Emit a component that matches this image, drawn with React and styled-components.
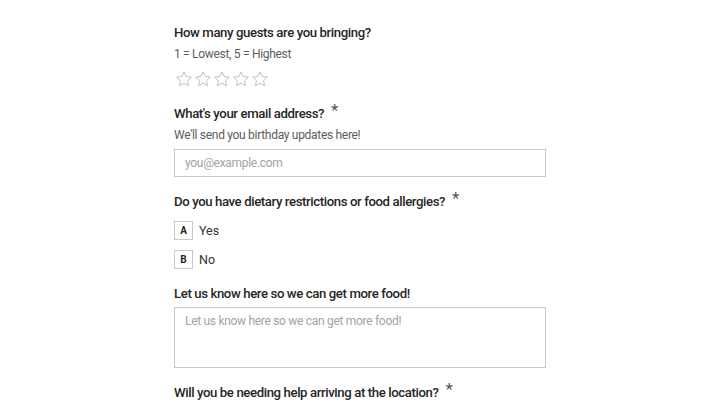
import React from "react";
import styled, { createGlobalStyle } from "styled-components";

const GlobalStyle = createGlobalStyle`
  html, body {
    margin: 0;
    padding: 0;
    background: #fff;
  }
  body {
    font-family: Roboto, "Noto Sans", sans-serif;
    color: #262626;
  }
`;

const Page = styled.div`
  width: 720px;
  height: 405px;
  overflow: hidden;
  display: flex;
  padding-left: 174px;
  box-sizing: border-box;
`;

const Form = styled.div`
  width: 372px;
  display: flex;
  flex-direction: column;
  padding-top: 23px;
`;

const Question = styled.div`
  display: flex;
  flex-direction: column;
  margin-bottom: ${(p) => p.gap || 15}px;
`;

const Title = styled.div`
  font-size: 13.2px;
  font-weight: 500;
  line-height: 20px;
  color: #262626;
  letter-spacing: -0.4px;
  white-space: nowrap;
`;

const Required = styled.span`
  display: inline-block;
  margin-left: 7px;
  font-size: 17px;
  font-weight: 400;
  color: #555;
  vertical-align: top;
  line-height: 14px;
  position: relative;
  top: -1px;
`;

const Hint = styled.div`
  font-size: 12px;
  line-height: 18px;
  color: #5c5c5c;
  margin-top: 2px;
  letter-spacing: -0.3px;
`;

const Stars = styled.div`
  display: flex;
  gap: 1px;
  height: 18px;
  margin-top: 7px;
  margin-left: 1px;
`;

const TextInput = styled.div`
  margin-top: 5px;
  height: 28px;
  border: 1px solid #cacaca;
  box-sizing: border-box;
  display: flex;
  align-items: center;
  padding-left: 10px;
  font-size: 12px;
  letter-spacing: -0.3px;
  color: #a3a3a3;
`;

const TextArea = styled(TextInput)`
  margin-top: 3px;
  height: 61px;
  align-items: flex-start;
  padding-top: 4px;
  line-height: 18px;
`;

const Options = styled.div`
  display: flex;
  flex-direction: column;
  gap: 10px;
  margin-top: 9px;
`;

const Option = styled.div`
  display: flex;
  align-items: center;
  gap: 6px;
  font-size: 12.5px;
  color: #333;
`;

const Key = styled.div`
  width: 19px;
  height: 19px;
  box-sizing: border-box;
  border: 1px solid #cacaca;
  display: flex;
  align-items: center;
  justify-content: center;
  font-size: 10px;
  font-weight: 700;
  color: #262626;
`;

const Star = () => (
  <svg width="18" height="18" viewBox="0 0 24 24" fill="none" stroke="#b8b8b8" strokeWidth="1.2" strokeLinejoin="round">
    <path d="M12 2.5l2.9 6.2 6.8.8-5 4.7 1.3 6.7L12 17.6l-6 3.3 1.3-6.7-5-4.7 6.8-.8z" />
  </svg>
);

export default function App() {
  return (
    <>
      <GlobalStyle />
      <Page>
        <Form>
          <Question gap={16}>
            <Title>How many guests are you bringing?</Title>
            <Hint>1 = Lowest, 5 = Highest</Hint>
            <Stars>
              {[0, 1, 2, 3, 4].map((i) => (
                <Star key={i} />
              ))}
            </Stars>
          </Question>
          <Question>
            <Title>
              What's your email address?<Required>*</Required>
            </Title>
            <Hint>We'll send you birthday updates here!</Hint>
            <TextInput>you@example.com</TextInput>
          </Question>
          <Question>
            <Title>
              Do you have dietary restrictions or food allergies?<Required>*</Required>
            </Title>
            <Options>
              <Option>
                <Key>A</Key>Yes
              </Option>
              <Option>
                <Key>B</Key>No
              </Option>
            </Options>
          </Question>
          <Question>
            <Title>Let us know here so we can get more food!</Title>
            <TextArea>Let us know here so we can get more food!</TextArea>
          </Question>
          <Question>
            <Title>
              Will you be needing help arriving at the location?<Required>*</Required>
            </Title>
          </Question>
        </Form>
      </Page>
    </>
  );
}
